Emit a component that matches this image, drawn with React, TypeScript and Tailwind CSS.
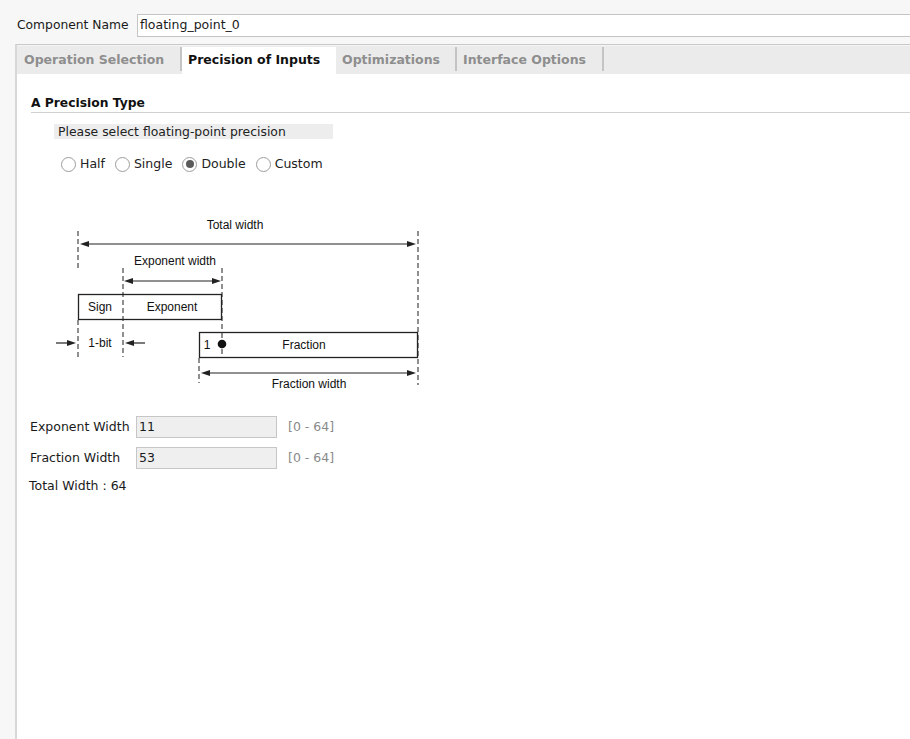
import React from "react";

const ui = { fontFamily: '"DejaVu Sans", Verdana, sans-serif' };

function Radio({ label, checked, ml }: { label: string; checked?: boolean; ml: string }) {
  return (
    <div className={`flex items-center ${ml}`}>
      <div className="w-[15px] h-[15px] rounded-full border border-[#9c9c9c] bg-white flex items-center justify-center">
        {checked && <div className="w-[8px] h-[8px] rounded-full bg-[#5a5a5a]" />}
      </div>
      <span className="ml-[4px] text-[12.5px] text-[#222]">{label}</span>
    </div>
  );
}

function Arrow({ x1, x2, y }: { x1: number; x2: number; y: number }) {
  return (
    <g>
      <line x1={x1 + 6} y1={y} x2={x2 - 6} y2={y} stroke="#222" strokeWidth={1.2} />
      <polygon points={`${x1},${y} ${x1 + 9},${y - 3} ${x1 + 9},${y + 3}`} fill="#222" />
      <polygon points={`${x2},${y} ${x2 - 9},${y - 3} ${x2 - 9},${y + 3}`} fill="#222" />
    </g>
  );
}

function Diagram() {
  const dash = { stroke: "#333", strokeWidth: 1.1, strokeDasharray: "5 3" };
  const t = { fontFamily: '"Liberation Sans", Arial, sans-serif', fontSize: 12, fill: "#111" };
  return (
    <svg width="400" height="200" viewBox="0 0 400 200" className="block">
      <text x={195} y={28} textAnchor="middle" style={t}>Total width</text>
      <line x1={38} y1={30} x2={38} y2={68} {...dash} />
      <line x1={378} y1={30} x2={378} y2={184} {...dash} />
      <Arrow x1={40} x2={376} y={43} />

      <text x={135} y={64} textAnchor="middle" style={t}>Exponent width</text>
      <line x1={83} y1={67} x2={83} y2={156} {...dash} />
      <line x1={182} y1={67} x2={182} y2={156} {...dash} />
      <Arrow x1={84} x2={181} y={80} />

      <rect x={38.5} y={93.5} width={143} height={25} fill="none" stroke="#222" strokeWidth={1.3} />
      <text x={60} y={110} textAnchor="middle" style={t}>Sign</text>
      <text x={132} y={110} textAnchor="middle" style={t}>Exponent</text>

      <line x1={38} y1={119} x2={38} y2={156} {...dash} />
      <line x1={16} y1={142} x2={30} y2={142} stroke="#222" strokeWidth={1.2} />
      <polygon points="36,142 27,139 27,145" fill="#222" />
      <text x={60} y={146} textAnchor="middle" style={t}>1-bit</text>
      <line x1={92} y1={142} x2={105} y2={142} stroke="#222" strokeWidth={1.2} />
      <polygon points="85,142 94,139 94,145" fill="#222" />

      <rect x={159.5} y={131.5} width={218} height={25} fill="#fff" stroke="#222" strokeWidth={1.3} />
      <line x1={182} y1={132} x2={182} y2={156} {...dash} />
      <text x={167} y={148} textAnchor="middle" style={t}>1</text>
      <circle cx={182} cy={143} r={4.3} fill="#111" />
      <text x={264} y={148} textAnchor="middle" style={t}>Fraction</text>

      <line x1={159} y1={157} x2={159} y2={182} {...dash} />
      <Arrow x1={161} x2={376} y={172} />
      <text x={269} y={187} textAnchor="middle" style={t}>Fraction width</text>
    </svg>
  );
}

export default function App() {
  return (
    <div className="w-[910px] h-[739px] bg-[#f7f7f7] overflow-hidden text-[#1a1a1a]" style={ui}>
      <div className="flex items-center pt-[14px]">
        <span className="ml-[17px] w-[120px] text-[12.3px]">Component Name</span>
        <div className="h-[23px] flex-1 bg-white border border-[#c4c4c4] border-r-0 flex items-center pl-[2px] text-[12.5px]">
          floating_point_0
        </div>
      </div>

      <div className="mt-[7px] ml-[15px] h-[700px] border-l-2 border-[#d8d8d8] border-t border-t-[#c8c8c8] bg-white flex flex-col">
        <div className="pt-[1px] bg-[#f5f5f5]">
          <div className="h-[28px] bg-[#ebebeb] flex items-end text-[12.5px] font-bold">
            <div className="w-[163px] h-[27px] flex items-center pl-[7px] text-[#8e8e8e]">Operation Selection</div>
            <div className="w-[2px] h-[24px] bg-[#c4c4c4] self-start mt-[1px]" />
            <div className="w-[154px] h-[27px] bg-white flex items-center pl-[6px] text-[#111]">Precision of Inputs</div>
            <div className="w-[119px] h-[27px] flex items-center pl-[6px] text-[#8e8e8e]">Optimizations</div>
            <div className="w-[2px] h-[24px] bg-[#c4c4c4] self-start mt-[1px]" />
            <div className="w-[145px] h-[27px] flex items-center pl-[6px] text-[#8e8e8e]">Interface Options</div>
            <div className="w-[2px] h-[24px] bg-[#c4c4c4] self-start mt-[1px]" />
          </div>
        </div>

        <div className="pl-[14px] pt-[21px] flex flex-col">
          <div className="h-[18px] leading-[16px] border-b border-[#d0d0d0] font-bold text-[12.3px] text-[#111]">
            A Precision Type
          </div>
          <div className="mt-[11px] ml-[23px] w-[279px] h-[15px] bg-[#ededed] pl-[4px] leading-[15px] text-[12.4px] text-[#222]">
            Please select floating-point precision
          </div>
          <div className="mt-[17px] h-[16px] flex items-center">
            <Radio label="Half" ml="ml-[30px]" />
            <Radio label="Single" ml="ml-[10px]" />
            <Radio label="Double" checked ml="ml-[10px]" />
            <Radio label="Custom" ml="ml-[10px]" />
          </div>

          <div className="mt-[29px] ml-[9px]">
            <Diagram />
          </div>

          <div className="-ml-px mt-[15px] flex items-center h-[22px] text-[12.5px]">
            <span className="w-[106px]">Exponent Width</span>
            <div className="w-[141px] h-[22px] bg-[#efefef] border border-[#c6c6c6] flex items-center pl-[2px]">11</div>
            <span className="ml-[11px] text-[#8a8a8a]">[0 - 64]</span>
          </div>
          <div className="-ml-px mt-[9px] flex items-center h-[22px] text-[12.5px]">
            <span className="w-[106px]">Fraction Width</span>
            <div className="w-[141px] h-[22px] bg-[#efefef] border border-[#c6c6c6] flex items-center pl-[2px]">53</div>
            <span className="ml-[11px] text-[#8a8a8a]">[0 - 64]</span>
          </div>
          <div className="-ml-[2px] mt-[9px] leading-[16px] text-[12.5px]">Total Width : 64</div>
        </div>
      </div>
    </div>
  );
}
